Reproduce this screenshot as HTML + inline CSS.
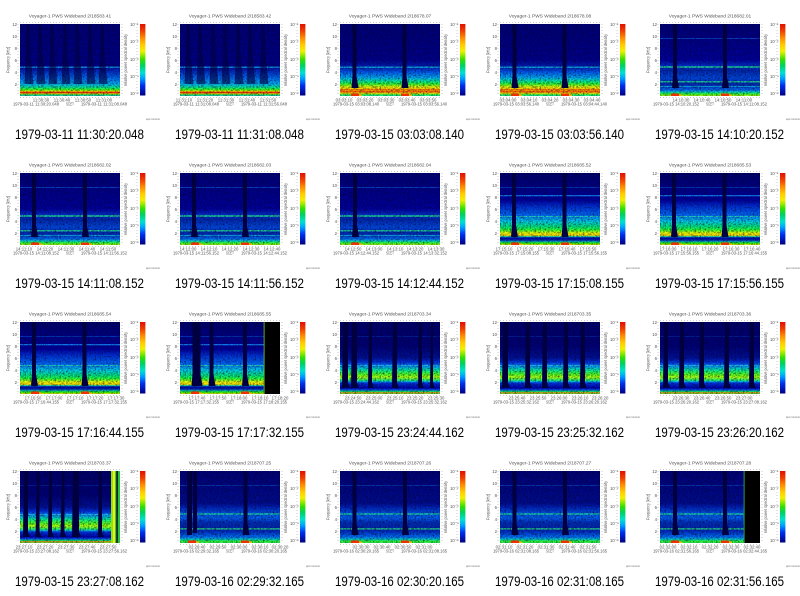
<!DOCTYPE html>
<html><head><meta charset="utf-8"><title>Voyager-1 PWS Wideband</title>
<style>
html,body{margin:0;padding:0;background:#fff;width:800px;height:596px;overflow:hidden}
svg{display:block}
text{font-family:"Liberation Sans",sans-serif;fill:#555}
.t{font-size:4.8px;text-anchor:middle}
.s{font-size:4.3px}
.m{font-size:4.3px;text-anchor:middle}
.l{font-size:13.4px;fill:#000}
.f{font-size:3px;fill:#666}
.b{fill:#000040}
.k{fill:#000}
</style></head><body>
<svg width="800" height="596" viewBox="0 0 800 596" xmlns="http://www.w3.org/2000/svg">
<defs>
<filter id="n" x="0" y="0" width="1" height="1" color-interpolation-filters="sRGB"><feTurbulence type="fractalNoise" baseFrequency=".6" numOctaves="2" seed="4"/><feColorMatrix values="0 0 0 0 0 0 0 0 0 0 0 0 0 0 .1 1.5 0 0 0 -.62"/></filter>
<linearGradient id="cb" x1="0" y1="0" x2="0" y2="1">
<stop offset="0" stop-color="#e01000"/><stop offset=".1" stop-color="#f04000"/><stop offset=".2" stop-color="#ff9000"/><stop offset=".3" stop-color="#ffd000"/><stop offset=".38" stop-color="#f0f000"/><stop offset=".5" stop-color="#30e000"/><stop offset=".58" stop-color="#00d060"/><stop offset=".68" stop-color="#00e0d0"/><stop offset=".76" stop-color="#00a0ff"/><stop offset=".86" stop-color="#0030f0"/><stop offset="1" stop-color="#000080"/>
</linearGradient>
<linearGradient id="gA" x1="0" y1="0" x2="0" y2="1">
<stop offset="0" stop-color="#000078"/><stop offset=".58" stop-color="#000088"/><stop offset=".65" stop-color="#0028c0"/><stop offset=".75" stop-color="#0068f0"/><stop offset=".833" stop-color="#00b0f4"/><stop offset=".883" stop-color="#00e890"/><stop offset=".917" stop-color="#50ff00"/><stop offset=".933" stop-color="#f8e800"/><stop offset=".95" stop-color="#f01000"/><stop offset=".9625" stop-color="#ff9800"/><stop offset=".98" stop-color="#40e840"/><stop offset="1" stop-color="#00c8d8"/>
</linearGradient>
<linearGradient id="gB" x1="0" y1="0" x2="0" y2="1">
<stop offset="0" stop-color="#000078"/><stop offset=".5" stop-color="#00008c"/><stop offset=".6" stop-color="#0020b8"/><stop offset=".667" stop-color="#0058f0"/><stop offset=".75" stop-color="#00b0f4"/><stop offset=".792" stop-color="#00e8a0"/><stop offset=".833" stop-color="#30f830"/><stop offset=".875" stop-color="#e8f800"/><stop offset=".917" stop-color="#ffa800"/><stop offset=".942" stop-color="#ff5800"/><stop offset=".96" stop-color="#f8d800"/><stop offset=".98" stop-color="#40f840"/><stop offset="1" stop-color="#00e8a0"/>
</linearGradient>
<linearGradient id="gC" x1="0" y1="0" x2="0" y2="1">
<stop offset="0" stop-color="#000078"/><stop offset=".5" stop-color="#00009c"/><stop offset=".583" stop-color="#0030d0"/><stop offset=".65" stop-color="#0028b0"/><stop offset=".75" stop-color="#0048e0"/><stop offset=".833" stop-color="#0028b0"/><stop offset=".917" stop-color="#0068f0"/><stop offset=".942" stop-color="#00c8d8"/><stop offset=".967" stop-color="#20f840"/><stop offset="1" stop-color="#a8f800"/>
</linearGradient>
<linearGradient id="gD" x1="0" y1="0" x2="0" y2="1">
<stop offset="0" stop-color="#00006c"/><stop offset=".38" stop-color="#0000a0"/><stop offset=".45" stop-color="#0028d0"/><stop offset=".583" stop-color="#0068f8"/><stop offset=".667" stop-color="#00c8e8"/><stop offset=".75" stop-color="#00e878"/><stop offset=".792" stop-color="#30ff30"/><stop offset=".833" stop-color="#f0f800"/><stop offset=".867" stop-color="#f8d800"/><stop offset=".885" stop-color="#00d8c8"/><stop offset=".9" stop-color="#0000b0"/><stop offset=".933" stop-color="#0028b8"/><stop offset=".95" stop-color="#00a8c8"/><stop offset=".975" stop-color="#20f800"/><stop offset="1" stop-color="#f8e800"/>
</linearGradient>
<linearGradient id="gE" x1="0" y1="0" x2="0" y2="1">
<stop offset="0" stop-color="#00006c"/><stop offset=".333" stop-color="#000078"/><stop offset=".5" stop-color="#001098"/><stop offset=".56" stop-color="#0030e0"/><stop offset=".583" stop-color="#0058f0"/><stop offset=".625" stop-color="#00a8ec"/><stop offset=".667" stop-color="#00e8a0"/><stop offset=".725" stop-color="#50ff20"/><stop offset=".767" stop-color="#a8ff10"/><stop offset=".808" stop-color="#20f868"/><stop offset=".829" stop-color="#00b8f4"/><stop offset=".845" stop-color="#0038e0"/><stop offset=".917" stop-color="#0000b0"/><stop offset=".942" stop-color="#0050f0"/><stop offset=".967" stop-color="#00e868"/><stop offset=".983" stop-color="#ff9800"/><stop offset="1" stop-color="#30e848"/>
</linearGradient>
<linearGradient id="gF" x1="0" y1="0" x2="0" y2="1">
<stop offset="0" stop-color="#000078"/><stop offset=".45" stop-color="#000c90"/><stop offset=".5" stop-color="#0020b8"/><stop offset=".583" stop-color="#0050e0"/><stop offset=".65" stop-color="#0060f0"/><stop offset=".708" stop-color="#0030c0"/><stop offset=".783" stop-color="#0028b0"/><stop offset=".833" stop-color="#0028c0"/><stop offset=".917" stop-color="#0070f8"/><stop offset=".95" stop-color="#00c8c8"/><stop offset=".975" stop-color="#30f830"/><stop offset="1" stop-color="#30f058"/>
</linearGradient>
<rect id="nz" x="20" y="24" width="100" height="72" filter="url(#n)"/>
<g id="A"><rect x="20" y="24" width="100" height="72" fill="url(#gA)"/><rect x="20" y="66.6" width="100" height="1.2" fill="#10a8f0"/><use href="#nz"/></g>
<g id="B"><rect x="20" y="24" width="100" height="72" fill="url(#gB)"/><rect x="20" y="66.6" width="100" height="1.2" fill="#10b8e8"/><rect x="20" y="89" width="100" height=".9" fill="#ff5000" opacity=".6"/><use href="#nz"/></g>
<g id="C"><rect x="20" y="24" width="100" height="72" fill="url(#gC)"/><rect x="20" y="38" width="100" height=".7" fill="#1058e0"/><rect x="20" y="66.3" width="100" height="1.4" fill="#20e098"/><rect x="20" y="81.2" width="100" height="1.2" fill="#20e098"/><rect x="20" y="86" width="100" height=".8" fill="#10b8e8"/><use href="#nz"/></g>
<g id="D"><rect x="20" y="24" width="100" height="72" fill="url(#gD)"/><rect x="20" y="38" width="100" height=".6" fill="#0058d8"/><rect x="20" y="46" width="100" height="1.3" fill="#1078f0"/><rect x="20" y="67" width="100" height=".9" fill="#20d0c8"/><use href="#nz"/></g>
<g id="E"><rect x="20" y="24" width="100" height="72" fill="url(#gE)"/><rect x="20" y="38" width="100" height=".5" fill="#0038b8"/><rect x="20" y="67" width="100" height=".7" fill="#30c8f8"/><use href="#nz"/></g>
<g id="F"><rect x="20" y="24" width="100" height="72" fill="url(#gF)"/><rect x="20" y="38.4" width="100" height=".6" fill="#0850d0"/><rect x="20" y="66.4" width="100" height="1.2" fill="#20e0a8"/><rect x="20" y="81.3" width="100" height="1.2" fill="#20e088"/><use href="#nz"/></g>
<path id="w" class="b" d="M-2 24h4v52l2 12h-7l1-12z"/>
<path id="v" class="b" fill-opacity=".62" d="M-1.500 24h3l1 30 3 30h-9l1.500-30z"/>
<g id="s"><rect x="-2" y="93.500" width="8" height="2.500" fill="#f03000"/><rect x="6" y="94.500" width="3" height="1.500" fill="#f0c000"/></g>
<g id="fr">
<path d="M18 24v72M20 97.500h100M20 22.500h100M122 24v72M137 24v72" fill="none" stroke="#aaa" stroke-width="1" stroke-dasharray=".6 2.400"/>
<rect x="140" y="24" width="5.400" height="71.500" fill="url(#cb)"/>
<g class="s" text-anchor="end">
<text x="17" y="26">12</text><text x="17" y="38">10</text><text x="17" y="50">8</text><text x="17" y="62">6</text><text x="17" y="74">4</text><text x="17" y="86">2</text>
</g>
<text class="s" transform="translate(9.500,73) rotate(-90)" textLength="26" lengthAdjust="spacingAndGlyphs">Frequency [kHz]</text>
<text class="s" transform="translate(127,86) rotate(-90)" textLength="52" lengthAdjust="spacingAndGlyphs">relative power spectral density</text>
<g class="s">
<text x="130" y="26">10⁻¹</text><text x="130" y="43">10⁻²</text><text x="130" y="61">10⁻³</text><text x="130" y="78">10⁻⁴</text><text x="130" y="95">10⁻⁵</text>
</g>
<text class="f" x="146" y="120" textLength="14" lengthAdjust="spacingAndGlyphs">spc:xxxxxx</text>
<text class="s" x="66" y="105.500" textLength="8" lengthAdjust="spacingAndGlyphs">SCET</text>
</g>
</defs>

<!-- ROW 0 -->
<g><use href="#A"/><use href="#v" x="28"/><use href="#v" x="40"/><use href="#v" x="52"/><use href="#v" x="65"/><use href="#v" x="77"/><use href="#v" x="90"/><use href="#v" x="102"/><use href="#fr"/>
<text class="t" x="70" y="17.500">Voyager-1 PWS Wideband 2/18583.41</text>
<text class="m" x="41" y="101.500">11:30:30</text><text class="m" x="62" y="101.500">11:30:40</text><text class="m" x="83" y="101.500">11:30:50</text><text class="m" x="104" y="101.500">11:31:00</text>
<text class="s" x="13" y="105.500" textLength="46" lengthAdjust="spacingAndGlyphs">1979-03-11 11:30:20.048</text><text class="s" x="81" y="105.500" textLength="46" lengthAdjust="spacingAndGlyphs">1979-03-11 11:31:08.048</text>
<text class="l" x="15" y="139" textLength="129" lengthAdjust="spacingAndGlyphs">1979-03-11 11:30:20.048</text></g>

<g transform="translate(160,0)"><use href="#A"/><use href="#v" x="28"/><use href="#v" x="40"/><use href="#v" x="53"/><use href="#v" x="65"/><use href="#v" x="78"/><use href="#v" x="90"/><use href="#v" x="103"/><use href="#fr"/>
<text class="t" x="70" y="17.500">Voyager-1 PWS Wideband 2/18583.42</text>
<text class="m" x="24" y="101.500">11:31:10</text><text class="m" x="45" y="101.500">11:31:20</text><text class="m" x="66" y="101.500">11:31:30</text><text class="m" x="87" y="101.500">11:31:40</text><text class="m" x="108" y="101.500">11:31:50</text>
<text class="s" x="13" y="105.500" textLength="46" lengthAdjust="spacingAndGlyphs">1979-03-11 11:31:08.048</text><text class="s" x="81" y="105.500" textLength="46" lengthAdjust="spacingAndGlyphs">1979-03-11 11:31:56.048</text>
<text class="l" x="15" y="139" textLength="129" lengthAdjust="spacingAndGlyphs">1979-03-11 11:31:08.048</text></g>

<g transform="translate(320,0)"><use href="#B"/><use href="#w" x="34.500"/><use href="#w" x="84.500"/><use href="#s" x="33"/><use href="#s" x="83"/><use href="#fr"/>
<text class="t" x="70" y="17.500">Voyager-1 PWS Wideband 2/18678.07</text>
<text class="m" x="24" y="101.500">03:03:10</text><text class="m" x="45" y="101.500">03:03:20</text><text class="m" x="66" y="101.500">03:03:30</text><text class="m" x="87" y="101.500">03:03:40</text><text class="m" x="108" y="101.500">03:03:50</text>
<text class="s" x="13" y="105.500" textLength="46" lengthAdjust="spacingAndGlyphs">1979-03-15 03:03:08.140</text><text class="s" x="81" y="105.500" textLength="46" lengthAdjust="spacingAndGlyphs">1979-03-15 03:03:56.140</text>
<text class="l" x="15" y="139" textLength="129" lengthAdjust="spacingAndGlyphs">1979-03-15 03:03:08.140</text></g>

<g transform="translate(480,0)"><use href="#B"/><use href="#w" x="34.500"/><use href="#w" x="84.500"/><use href="#s" x="33"/><use href="#s" x="83"/><use href="#fr"/>
<text class="t" x="70" y="17.500">Voyager-1 PWS Wideband 2/18678.08</text>
<text class="m" x="28" y="101.500">03:04:00</text><text class="m" x="49" y="101.500">03:04:10</text><text class="m" x="70" y="101.500">03:04:20</text><text class="m" x="91" y="101.500">03:04:30</text><text class="m" x="112" y="101.500">03:04:40</text>
<text class="s" x="13" y="105.500" textLength="46" lengthAdjust="spacingAndGlyphs">1979-03-15 03:03:56.140</text><text class="s" x="81" y="105.500" textLength="46" lengthAdjust="spacingAndGlyphs">1979-03-15 03:04:44.140</text>
<text class="l" x="15" y="139" textLength="129" lengthAdjust="spacingAndGlyphs">1979-03-15 03:03:56.140</text></g>

<g transform="translate(640,0)"><use href="#C"/><use href="#w" x="35"/><use href="#w" x="85"/><use href="#s" x="33"/><use href="#s" x="83"/><use href="#fr"/>
<text class="t" x="70" y="17.500">Voyager-1 PWS Wideband 2/18682.01</text>
<text class="m" x="41" y="101.500">14:10:30</text><text class="m" x="62" y="101.500">14:10:40</text><text class="m" x="83" y="101.500">14:10:50</text><text class="m" x="104" y="101.500">14:11:00</text>
<text class="s" x="13" y="105.500" textLength="46" lengthAdjust="spacingAndGlyphs">1979-03-15 14:10:20.152</text><text class="s" x="81" y="105.500" textLength="46" lengthAdjust="spacingAndGlyphs">1979-03-15 14:11:08.152</text>
<text class="l" x="15" y="139" textLength="129" lengthAdjust="spacingAndGlyphs">1979-03-15 14:10:20.152</text></g>

<!-- ROW 1 -->
<g transform="translate(0,149)"><use href="#C"/><use href="#w" x="34"/><use href="#w" x="85"/><use href="#s" x="33"/><use href="#s" x="83"/><use href="#fr"/>
<text class="t" x="70" y="17.500">Voyager-1 PWS Wideband 2/18682.02</text>
<text class="m" x="24" y="101.500">14:11:10</text><text class="m" x="45" y="101.500">14:11:20</text><text class="m" x="66" y="101.500">14:11:30</text><text class="m" x="87" y="101.500">14:11:40</text><text class="m" x="108" y="101.500">14:11:50</text>
<text class="s" x="13" y="105.500" textLength="46" lengthAdjust="spacingAndGlyphs">1979-03-15 14:11:08.152</text><text class="s" x="81" y="105.500" textLength="46" lengthAdjust="spacingAndGlyphs">1979-03-15 14:11:56.152</text>
<text class="l" x="15" y="139" textLength="129" lengthAdjust="spacingAndGlyphs">1979-03-15 14:11:08.152</text></g>

<g transform="translate(160,149)"><use href="#C"/><use href="#w" x="34"/><use href="#w" x="85"/><use href="#s" x="33"/><use href="#s" x="83"/><use href="#fr"/>
<text class="t" x="70" y="17.500">Voyager-1 PWS Wideband 2/18682.03</text>
<text class="m" x="28" y="101.500">14:12:00</text><text class="m" x="49" y="101.500">14:12:10</text><text class="m" x="70" y="101.500">14:12:20</text><text class="m" x="91" y="101.500">14:12:30</text><text class="m" x="112" y="101.500">14:12:40</text>
<text class="s" x="13" y="105.500" textLength="46" lengthAdjust="spacingAndGlyphs">1979-03-15 14:11:56.152</text><text class="s" x="81" y="105.500" textLength="46" lengthAdjust="spacingAndGlyphs">1979-03-15 14:12:44.152</text>
<text class="l" x="15" y="139" textLength="129" lengthAdjust="spacingAndGlyphs">1979-03-15 14:11:56.152</text></g>

<g transform="translate(320,149)"><use href="#C"/><use href="#w" x="35"/><use href="#s" x="33"/><use href="#fr"/>
<text class="t" x="70" y="17.500">Voyager-1 PWS Wideband 2/18682.04</text>
<text class="m" x="33" y="101.500">14:12:50</text><text class="m" x="54" y="101.500">14:13:00</text><text class="m" x="75" y="101.500">14:13:10</text><text class="m" x="95" y="101.500">14:13:20</text><text class="m" x="116" y="101.500">14:13:30</text>
<text class="s" x="13" y="105.500" textLength="46" lengthAdjust="spacingAndGlyphs">1979-03-15 14:12:44.152</text><text class="s" x="81" y="105.500" textLength="46" lengthAdjust="spacingAndGlyphs">1979-03-15 14:13:32.152</text>
<text class="l" x="15" y="139" textLength="129" lengthAdjust="spacingAndGlyphs">1979-03-15 14:12:44.152</text></g>

<g transform="translate(480,149)"><use href="#D"/><use href="#w" x="34"/><use href="#w" x="84.500"/><use href="#s" x="33"/><use href="#s" x="83"/><use href="#fr"/>
<text class="t" x="70" y="17.500">Voyager-1 PWS Wideband 2/18685.52</text>
<text class="m" x="24" y="101.500">17:15:10</text><text class="m" x="45" y="101.500">17:15:20</text><text class="m" x="66" y="101.500">17:15:30</text><text class="m" x="87" y="101.500">17:15:40</text><text class="m" x="108" y="101.500">17:15:50</text>
<text class="s" x="13" y="105.500" textLength="46" lengthAdjust="spacingAndGlyphs">1979-03-15 17:15:08.155</text><text class="s" x="81" y="105.500" textLength="46" lengthAdjust="spacingAndGlyphs">1979-03-15 17:15:56.155</text>
<text class="l" x="15" y="139" textLength="129" lengthAdjust="spacingAndGlyphs">1979-03-15 17:15:08.155</text></g>

<g transform="translate(640,149)"><use href="#D"/><use href="#w" x="34"/><use href="#w" x="84.500"/><use href="#s" x="33"/><use href="#s" x="83"/><use href="#fr"/>
<text class="t" x="70" y="17.500">Voyager-1 PWS Wideband 2/18685.53</text>
<text class="m" x="28" y="101.500">17:16:00</text><text class="m" x="49" y="101.500">17:16:10</text><text class="m" x="70" y="101.500">17:16:20</text><text class="m" x="91" y="101.500">17:16:30</text><text class="m" x="112" y="101.500">17:16:40</text>
<text class="s" x="13" y="105.500" textLength="46" lengthAdjust="spacingAndGlyphs">1979-03-15 17:15:56.155</text><text class="s" x="81" y="105.500" textLength="46" lengthAdjust="spacingAndGlyphs">1979-03-15 17:16:44.155</text>
<text class="l" x="15" y="139" textLength="129" lengthAdjust="spacingAndGlyphs">1979-03-15 17:15:56.155</text></g>

<!-- ROW 2 -->
<g transform="translate(0,298)"><use href="#D"/><use href="#w" x="34"/><use href="#w" x="84.500"/><use href="#s" x="33"/><use href="#s" x="83"/><use href="#fr"/>
<text class="t" x="70" y="17.500">Voyager-1 PWS Wideband 2/18685.54</text>
<text class="m" x="33" y="101.500">17:16:50</text><text class="m" x="54" y="101.500">17:17:00</text><text class="m" x="75" y="101.500">17:17:10</text><text class="m" x="95" y="101.500">17:17:20</text><text class="m" x="116" y="101.500">17:17:30</text>
<text class="s" x="13" y="105.500" textLength="46" lengthAdjust="spacingAndGlyphs">1979-03-15 17:16:44.155</text><text class="s" x="81" y="105.500" textLength="46" lengthAdjust="spacingAndGlyphs">1979-03-15 17:17:32.155</text>
<text class="l" x="15" y="139" textLength="129" lengthAdjust="spacingAndGlyphs">1979-03-15 17:16:44.155</text></g>

<g transform="translate(160,298)"><use href="#D"/><use href="#w" x="34.500"/><use href="#w" x="38.500"/><use href="#w" x="51.500"/><use href="#w" x="85"/><use href="#s" x="33"/><use href="#s" x="83"/><rect x="103.700" y="24" width=".8" height="72" fill="#70d020"/><rect class="k" x="104.500" y="24" width="15.500" height="72"/><use href="#fr"/>
<text class="t" x="70" y="17.500">Voyager-1 PWS Wideband 2/18685.55</text>
<text class="m" x="37" y="101.500">17:17:40</text><text class="m" x="58" y="101.500">17:17:50</text><text class="m" x="79" y="101.500">17:18:00</text><text class="m" x="100" y="101.500">17:18:10</text><text class="m" x="120" y="101.500">17:18:20</text>
<text class="s" x="13" y="105.500" textLength="46" lengthAdjust="spacingAndGlyphs">1979-03-15 17:17:32.155</text><text class="s" x="81" y="105.500" textLength="46" lengthAdjust="spacingAndGlyphs">1979-03-15 17:18:20.155</text>
<text class="l" x="15" y="139" textLength="129" lengthAdjust="spacingAndGlyphs">1979-03-15 17:17:32.155</text></g>

<g transform="translate(320,298)"><use href="#E"/><g class="b"><path d="M23 24h5v61l2 5h-8z"/><path d="M32 24h5v61l2 5h-8z"/><path d="M49 24h3v61l2 5h-6z"/><path d="M73 24h4v61l2 5h-7z"/><path d="M99 24h3v61l2 5h-6z"/><path d="M111 24h2v61l2 5h-5z"/></g><use href="#fr"/>
<text class="t" x="70" y="17.500">Voyager-1 PWS Wideband 2/18703.34</text>
<text class="m" x="33" y="101.500">23:24:50</text><text class="m" x="54" y="101.500">23:25:00</text><text class="m" x="75" y="101.500">23:25:10</text><text class="m" x="95" y="101.500">23:25:20</text><text class="m" x="116" y="101.500">23:25:30</text>
<text class="s" x="13" y="105.500" textLength="46" lengthAdjust="spacingAndGlyphs">1979-03-15 23:24:44.162</text><text class="s" x="81" y="105.500" textLength="46" lengthAdjust="spacingAndGlyphs">1979-03-15 23:25:32.162</text>
<text class="l" x="15" y="139" textLength="129" lengthAdjust="spacingAndGlyphs">1979-03-15 23:24:44.162</text></g>

<g transform="translate(480,298)"><use href="#E"/><g class="b"><path d="M23 24h5v61l2 5h-8z"/><path d="M46 24h4v61l2 5h-7z"/><path d="M63 24h4v61l2 5h-7z"/><path d="M84 24h4v61l2 5h-7z"/><path d="M101 24h4v61l2 5h-7z"/></g><use href="#fr"/>
<text class="t" x="70" y="17.500">Voyager-1 PWS Wideband 2/18703.35</text>
<text class="m" x="37" y="101.500">23:25:40</text><text class="m" x="58" y="101.500">23:25:50</text><text class="m" x="79" y="101.500">23:26:00</text><text class="m" x="100" y="101.500">23:26:10</text><text class="m" x="120" y="101.500">23:26:20</text>
<text class="s" x="13" y="105.500" textLength="46" lengthAdjust="spacingAndGlyphs">1979-03-15 23:25:32.162</text><text class="s" x="81" y="105.500" textLength="46" lengthAdjust="spacingAndGlyphs">1979-03-15 23:26:20.162</text>
<text class="l" x="15" y="139" textLength="129" lengthAdjust="spacingAndGlyphs">1979-03-15 23:25:32.162</text></g>

<g transform="translate(640,298)"><use href="#E"/><g class="b"><path d="M24 24h4v61l2 5h-7z"/><path d="M40 24h4v61l2 5h-7z"/><path d="M60 24h4v61l2 5h-7z"/><path d="M85 24h4v61l2 5h-7z"/><path d="M110 24h4v61l2 5h-7z"/></g><use href="#fr"/>
<text class="t" x="70" y="17.500">Voyager-1 PWS Wideband 2/18703.36</text>
<text class="m" x="41" y="101.500">23:26:30</text><text class="m" x="62" y="101.500">23:26:40</text><text class="m" x="83" y="101.500">23:26:50</text><text class="m" x="104" y="101.500">23:27:00</text>
<text class="s" x="13" y="105.500" textLength="46" lengthAdjust="spacingAndGlyphs">1979-03-15 23:26:20.162</text><text class="s" x="81" y="105.500" textLength="46" lengthAdjust="spacingAndGlyphs">1979-03-15 23:27:08.162</text>
<text class="l" x="15" y="139" textLength="129" lengthAdjust="spacingAndGlyphs">1979-03-15 23:26:20.162</text></g>

<!-- ROW 3 -->
<g transform="translate(0,447)"><use href="#E"/><g class="b"><path d="M24 24h4v61l2 5h-7z"/><path d="M37 24h2.500v61l2 5h-6z"/><path d="M49 24h3v61l2 5h-6z"/><path d="M62 24h2.500v61l2 5h-6z"/><path d="M73 24h6v61l2 5h-9z"/><path d="M99 24h3v61l2 5h-6z"/></g><rect x="111" y="24" width="4.500" height="72" fill="#90e020"/><rect x="113" y="24" width="2" height="72" fill="#f0f000"/><rect x="115.500" y="24" width="1" height="72" fill="#00a080"/><rect class="k" x="116.500" y="24" width="1.300" height="72"/><rect x="117.800" y="24" width="2.200" height="72" fill="#30c040"/><use href="#fr"/>
<text class="t" x="70" y="17.500">Voyager-1 PWS Wideband 2/18703.37</text>
<text class="m" x="24" y="101.500">23:27:10</text><text class="m" x="45" y="101.500">23:27:20</text><text class="m" x="66" y="101.500">23:27:30</text><text class="m" x="87" y="101.500">23:27:40</text><text class="m" x="108" y="101.500">23:27:50</text>
<text class="s" x="13" y="105.500" textLength="46" lengthAdjust="spacingAndGlyphs">1979-03-15 23:27:08.162</text><text class="s" x="81" y="105.500" textLength="46" lengthAdjust="spacingAndGlyphs">1979-03-15 23:27:56.162</text>
<text class="l" x="15" y="139" textLength="129" lengthAdjust="spacingAndGlyphs">1979-03-15 23:27:08.162</text></g>

<g transform="translate(160,447)"><use href="#F"/><g class="b"><path d="M27 24h5v64h-5z"/><path d="M33 24h4v62h-4z"/></g><use href="#w" x="85.500"/><use href="#s" x="30"/><use href="#s" x="83"/><use href="#fr"/>
<text class="t" x="70" y="17.500">Voyager-1 PWS Wideband 2/18707.25</text>
<text class="m" x="37" y="101.500">02:29:40</text><text class="m" x="58" y="101.500">02:29:50</text><text class="m" x="79" y="101.500">02:30:00</text><text class="m" x="100" y="101.500">02:30:10</text><text class="m" x="120" y="101.500">02:30:20</text>
<text class="s" x="13" y="105.500" textLength="46" lengthAdjust="spacingAndGlyphs">1979-03-16 02:29:32.165</text><text class="s" x="81" y="105.500" textLength="46" lengthAdjust="spacingAndGlyphs">1979-03-16 02:30:20.165</text>
<text class="l" x="15" y="139" textLength="129" lengthAdjust="spacingAndGlyphs">1979-03-16 02:29:32.165</text></g>

<g transform="translate(320,447)"><use href="#F"/><use href="#w" x="34.500"/><use href="#w" x="85"/><use href="#s" x="33"/><use href="#s" x="83"/><use href="#fr"/>
<text class="t" x="70" y="17.500">Voyager-1 PWS Wideband 2/18707.26</text>
<text class="m" x="41" y="101.500">02:30:30</text><text class="m" x="62" y="101.500">02:30:40</text><text class="m" x="83" y="101.500">02:30:50</text><text class="m" x="104" y="101.500">02:31:00</text>
<text class="s" x="13" y="105.500" textLength="46" lengthAdjust="spacingAndGlyphs">1979-03-16 02:30:20.165</text><text class="s" x="81" y="105.500" textLength="46" lengthAdjust="spacingAndGlyphs">1979-03-16 02:31:08.165</text>
<text class="l" x="15" y="139" textLength="129" lengthAdjust="spacingAndGlyphs">1979-03-16 02:30:20.165</text></g>

<g transform="translate(480,447)"><use href="#F"/><use href="#w" x="34.500"/><use href="#w" x="85"/><use href="#s" x="33"/><use href="#s" x="83"/><use href="#fr"/>
<text class="t" x="70" y="17.500">Voyager-1 PWS Wideband 2/18707.27</text>
<text class="m" x="24" y="101.500">02:31:10</text><text class="m" x="45" y="101.500">02:31:20</text><text class="m" x="66" y="101.500">02:31:30</text><text class="m" x="87" y="101.500">02:31:40</text><text class="m" x="108" y="101.500">02:31:50</text>
<text class="s" x="13" y="105.500" textLength="46" lengthAdjust="spacingAndGlyphs">1979-03-16 02:31:08.165</text><text class="s" x="81" y="105.500" textLength="46" lengthAdjust="spacingAndGlyphs">1979-03-16 02:31:56.165</text>
<text class="l" x="15" y="139" textLength="129" lengthAdjust="spacingAndGlyphs">1979-03-16 02:31:08.165</text></g>

<g transform="translate(640,447)"><use href="#F"/><use href="#w" x="35"/><use href="#w" x="85"/><use href="#s" x="33"/><use href="#s" x="83"/><rect x="103.700" y="24" width=".8" height="72" fill="#30c060"/><rect class="k" x="104.500" y="24" width="15.500" height="72"/><use href="#fr"/>
<text class="t" x="70" y="17.500">Voyager-1 PWS Wideband 2/18707.28</text>
<text class="m" x="28" y="101.500">02:32:00</text><text class="m" x="49" y="101.500">02:32:10</text><text class="m" x="70" y="101.500">02:32:20</text><text class="m" x="91" y="101.500">02:32:30</text><text class="m" x="112" y="101.500">02:32:40</text>
<text class="s" x="13" y="105.500" textLength="46" lengthAdjust="spacingAndGlyphs">1979-03-16 02:31:56.165</text><text class="s" x="81" y="105.500" textLength="46" lengthAdjust="spacingAndGlyphs">1979-03-16 02:32:44.165</text>
<text class="l" x="15" y="139" textLength="129" lengthAdjust="spacingAndGlyphs">1979-03-16 02:31:56.165</text></g>
</svg>
</body></html>
